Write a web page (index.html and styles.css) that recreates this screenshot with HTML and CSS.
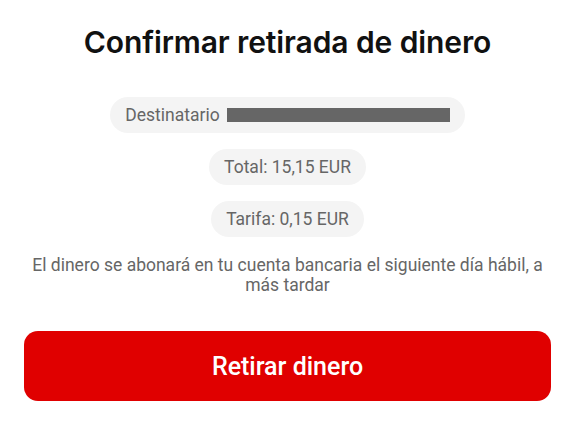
FILE: index.html
```html
<!DOCTYPE html>
<html lang="es">
<head>
<meta charset="utf-8">
<link rel="stylesheet" href="styles.css">
</head>
<body>
<main class="sheet">
  <h1 class="title">Confirmar retirada de dinero</h1>
  <div class="details">
    <div class="pill">Destinatario <span class="redacted"></span></div>
    <div class="pill">Total: 15,15 EUR</div>
    <div class="pill">Tarifa: 0,15 EUR</div>
  </div>
  <p class="note">El dinero se abonará en tu cuenta bancaria el siguiente día hábil, a más tardar</p>
  <button class="cta">Retirar dinero</button>
</main>
</body>
</html>
```
FILE: styles.css
```css
html, body {
  margin: 0;
  padding: 0;
  background: #fff;
}
.sheet {
  width: 575px;
  height: 431px;
  box-sizing: border-box;
  padding: 24px 24px 0;
  display: flex;
  flex-direction: column;
  align-items: center;
  font-family: Roboto, "Liberation Sans", sans-serif;
}
.title {
  margin: 0;
  font-family: Inter, "Liberation Sans", sans-serif;
  font-weight: 600;
  font-size: 30px;
  line-height: 36px;
  color: #111;
  letter-spacing: -0.1px;
}
.details {
  margin-top: 37px;
  display: flex;
  flex-direction: column;
  align-items: center;
  gap: 16px;
}
.pill {
  display: flex;
  align-items: center;
  gap: 7px;
  height: 36px;
  padding: 0 15px;
  border-radius: 18px;
  background: #f4f4f4;
  color: #666;
  font-size: 17.5px;
}
.redacted {
  display: inline-block;
  width: 223px;
  height: 14px;
  background: #666;
}
.note {
  margin: 18px 0 0;
  width: 527px;
  text-align: center;
  color: #666;
  font-size: 17.5px;
  line-height: 20px;
}
.cta {
  margin-top: 36px;
  width: 527px;
  height: 70px;
  border: none;
  border-radius: 14px;
  background: #e00000;
  color: #fff;
  font-family: Roboto, "Liberation Sans", sans-serif;
  font-weight: 500;
  font-size: 25px;
}
```
